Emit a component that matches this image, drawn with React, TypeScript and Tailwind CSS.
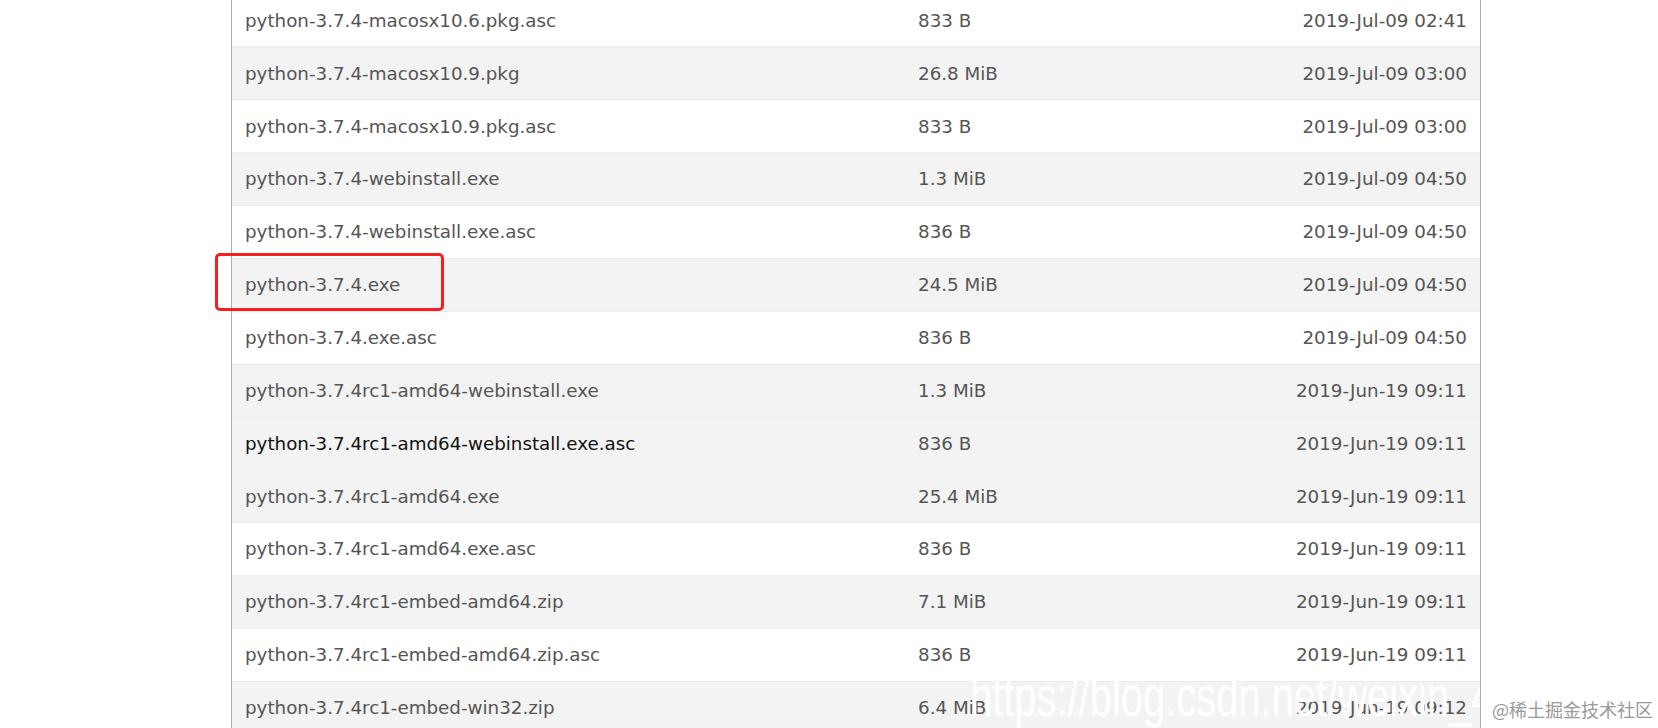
import React from "react";

type Row = { name: string; size: string; date: string; shade: boolean; dark?: boolean };

const rows: Row[] = [
  { name: "python-3.7.4-macosx10.6.pkg.asc", size: "833 B", date: "2019-Jul-09 02:41", shade: false },
  { name: "python-3.7.4-macosx10.9.pkg", size: "26.8 MiB", date: "2019-Jul-09 03:00", shade: true },
  { name: "python-3.7.4-macosx10.9.pkg.asc", size: "833 B", date: "2019-Jul-09 03:00", shade: false },
  { name: "python-3.7.4-webinstall.exe", size: "1.3 MiB", date: "2019-Jul-09 04:50", shade: true },
  { name: "python-3.7.4-webinstall.exe.asc", size: "836 B", date: "2019-Jul-09 04:50", shade: false },
  { name: "python-3.7.4.exe", size: "24.5 MiB", date: "2019-Jul-09 04:50", shade: true },
  { name: "python-3.7.4.exe.asc", size: "836 B", date: "2019-Jul-09 04:50", shade: false },
  { name: "python-3.7.4rc1-amd64-webinstall.exe", size: "1.3 MiB", date: "2019-Jun-19 09:11", shade: true },
  { name: "python-3.7.4rc1-amd64-webinstall.exe.asc", size: "836 B", date: "2019-Jun-19 09:11", shade: true, dark: true },
  { name: "python-3.7.4rc1-amd64.exe", size: "25.4 MiB", date: "2019-Jun-19 09:11", shade: true },
  { name: "python-3.7.4rc1-amd64.exe.asc", size: "836 B", date: "2019-Jun-19 09:11", shade: false },
  { name: "python-3.7.4rc1-embed-amd64.zip", size: "7.1 MiB", date: "2019-Jun-19 09:11", shade: true },
  { name: "python-3.7.4rc1-embed-amd64.zip.asc", size: "836 B", date: "2019-Jun-19 09:11", shade: false },
  { name: "python-3.7.4rc1-embed-win32.zip", size: "6.4 MiB", date: "2019-Jun-19 09:12", shade: true },
];

export default function App() {
  return (
    <div className="relative w-[1658px] h-[728px] overflow-hidden bg-white">
      <div
        className="relative ml-[231px] w-[1250px] h-[728px] overflow-hidden border-x border-[#ababab] text-[18.3px] text-[#555555]"
        style={{ fontFamily: '"DejaVu Sans", Verdana, sans-serif' }}
      >
        <div className="-mt-[5.4px]">
          {rows.map((r, i) => (
            <div
              key={i}
              className={
                "flex items-center h-[52.87px] pl-[13px] pr-[13px] border-b border-[#ebebf0] " +
                (r.shade ? "bg-[#f3f3f3]" : "bg-white")
              }
            >
              <div className={"w-[673px] shrink-0 whitespace-nowrap " + (r.dark ? "text-[#111111]" : "")}>
                {r.name}
              </div>
              <div className="whitespace-nowrap">{r.size}</div>
              <div className="ml-auto whitespace-nowrap">{r.date}</div>
            </div>
          ))}
        </div>
        <div
          className="absolute left-[738px] top-[668px] whitespace-nowrap text-white text-[57px] leading-none origin-left scale-x-[0.7]"
          style={{ fontFamily: '"Liberation Sans", Arial, sans-serif' }}
        >
          https://blog.csdn.net/weixin_44
        </div>
      </div>
      <div className="absolute left-[215px] top-[253px] w-[229px] h-[58px] border-[3px] border-[#f42020] rounded-[5px]" />
      <div
        className="absolute left-[1492px] top-[700px] text-[18px] leading-none text-[#999999] whitespace-nowrap"
        style={{ fontFamily: '"Noto Sans CJK SC", sans-serif' }}
      >
        @稀土掘金技术社区
      </div>
    </div>
  );
}
